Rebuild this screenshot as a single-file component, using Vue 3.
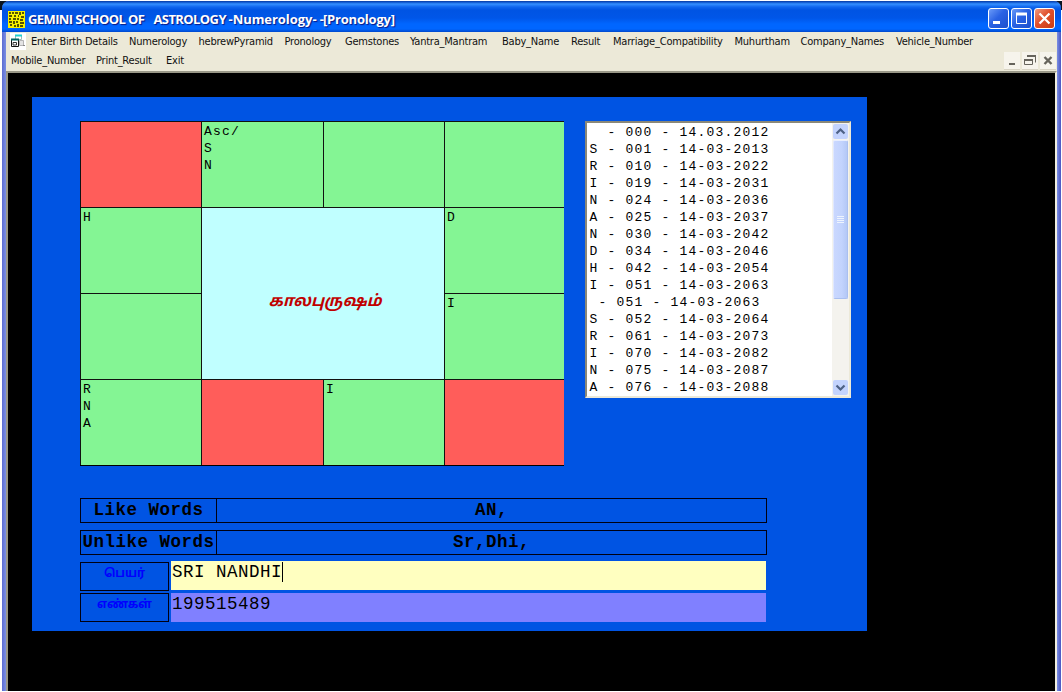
<template>
  <div class="screen">
    <div class="window">
      <header class="title-bar">
        <svg class="app-icon" width="17" height="17" viewBox="0 0 17 17">
          <rect width="17" height="17" fill="#f8f000" />
          <g stroke="#202000" stroke-width="1.5" fill="none">
            <path d="M1 2h2M5 1v2M7 2h3M12 1v3M14 2h2M1 5h3M6 5h2M10 5h1M13 6h3" />
            <path d="M2 7v2M5 8h3M10 7v2M12 9h3M1 11h3M6 10v3M8 11h2M12 12h4" />
            <path d="M2 14h2M6 15h2M10 13v3M12 15h3" />
          </g>
        </svg>
        <h1 class="title">
          <span class="t1">GEMINI SCHOOL OF</span>
          <span class="t2">ASTROLOGY</span>
          <span class="t3">-Numerology- -</span>
          <span class="t4">[Pronology]</span>
        </h1>
        <div class="controls">
          <button class="control">
            <svg width="21" height="21"><path d="M5 14.5h7" stroke="#fff" stroke-width="3" /></svg>
          </button>
          <button class="control">
            <svg width="21" height="21">
              <path d="M5.5 5.5h10v10h-10z" fill="none" stroke="#fff" />
              <path d="M5 6h11" stroke="#fff" stroke-width="3" />
            </svg>
          </button>
          <button class="control close">
            <svg width="21" height="21">
              <path d="M5.5 5.5l10 10M15.5 5.5l-10 10" stroke="#fff" stroke-width="2.3" />
            </svg>
          </button>
        </div>
      </header>

      <nav class="menu">
        <div class="menu-row first">
          <svg class="form-icon" width="16" height="17" viewBox="0 0 16 17">
            <rect width="16" height="17" fill="#fff" />
            <path d="M5.5 2.500h6v4h-6z" fill="#fff" stroke="#9bb" />
            <path d="M5 2.500h7" stroke="#20d0d0" stroke-width="2" />
            <path d="M9.500 7.500h4v5h-4z" fill="#e4e4e4" stroke="#b4b4b4" />
            <path d="M13 12.500h2" stroke="#888" />
            <path d="M1.500 6.500h7v7h-7z" fill="#fff" stroke="#111" />
            <path d="M1 6.500h8" stroke="#066" stroke-width="2" />
            <path d="M3 9.500h3.500v2.500h-3.500z" fill="none" stroke="#333" />
          </svg>
          <a v-for="item in menuTop" :key="item">{{ item }}</a>
        </div>
        <div class="menu-row second">
          <a v-for="item in menuBottom" :key="item">{{ item }}</a>
          <div class="mdi">
            <button><svg width="16" height="17"><path d="M5 12h6" stroke="#66645c" stroke-width="2" /></svg></button>
            <button>
              <svg width="16" height="17" fill="none" stroke="#66645c">
                <path d="M5 4.500h8.500v6" />
                <path d="M5 4h9" stroke-width="2" />
                <path d="M2.500 7.500h8v5h-8z" />
                <path d="M2 8h9" stroke-width="2" />
              </svg>
            </button>
            <button>
              <svg width="16" height="17"><path d="M4.500 5l7 7M11.500 5l-7 7" stroke="#66645c" stroke-width="2.400" /></svg>
            </button>
          </div>
        </div>
      </nav>

      <main class="client">
        <section class="panel">
          <div class="top">
            <div class="chart">
              <div v-for="(cell, i) in cells" :key="i" class="cell" :class="cell.type">{{ cell.text }}</div>
            </div>

            <div class="list">
              <div class="rows">
                <div v-for="(row, i) in rows" :key="i" class="row">{{ row }}</div>
              </div>
              <div class="scrollbar">
                <div class="arrow">
                  <svg width="15" height="15"><path d="M3.500 9.500l4-4 4 4" fill="none" stroke="#4d6185" stroke-width="2.200" /></svg>
                </div>
                <div class="thumb"><i></i><i></i><i></i><i></i></div>
                <div class="track"></div>
                <div class="arrow">
                  <svg width="15" height="15"><path d="M3.500 5.500l4 4 4-4" fill="none" stroke="#4d6185" stroke-width="2.200" /></svg>
                </div>
              </div>
            </div>
          </div>

          <div class="words">
            <div class="label">Like Words</div>
            <div class="value">AN,</div>
          </div>
          <div class="words">
            <div class="label">Unlike Words</div>
            <div class="value">Sr,Dhi,</div>
          </div>
          <div class="field name">
            <div class="field-label">பெயர்</div>
            <div class="field-value">{{ name }}<span class="caret"></span></div>
          </div>
          <div class="field numbers">
            <div class="field-label">எண்கள்</div>
            <div class="field-value">{{ numbers }}</div>
          </div>
        </section>
      </main>
    </div>
  </div>
</template>

<script setup>
import { ref } from 'vue';

const menuTop = [
  'Enter Birth Details', 'Numerology', 'hebrewPyramid', 'Pronology', 'Gemstones',
  'Yantra_Mantram', 'Baby_Name', 'Result', 'Marriage_Compatibility', 'Muhurtham',
  'Company_Names', 'Vehicle_Number'
];
const menuBottom = ['Mobile_Number', 'Print_Result', 'Exit'];

const name = ref('SRI NANDHI');
const numbers = ref('199515489');

// houses of the chart, row by row, the center one spans 2x2
const cells = [
  { type: 'red', text: '' },
  { type: 'green', text: 'Asc/\nS\nN' },
  { type: 'green', text: '' },
  { type: 'green', text: '' },
  { type: 'green', text: 'H' },
  { type: 'center', text: 'காலபுருஷம்' },
  { type: 'green', text: 'D' },
  { type: 'green', text: '' },
  { type: 'green', text: 'I' },
  { type: 'green', text: 'R\nN\nA' },
  { type: 'red', text: '' },
  { type: 'green', text: 'I' },
  { type: 'red', text: '' }
];

const rows = [
  '  - 000 - 14.03.2012',
  'S - 001 - 14-03-2013',
  'R - 010 - 14-03-2022',
  'I - 019 - 14-03-2031',
  'N - 024 - 14-03-2036',
  'A - 025 - 14-03-2037',
  'N - 030 - 14-03-2042',
  'D - 034 - 14-03-2046',
  'H - 042 - 14-03-2054',
  'I - 051 - 14-03-2063',
  ' - 051 - 14-03-2063',
  'S - 052 - 14-03-2064',
  'R - 061 - 14-03-2073',
  'I - 070 - 14-03-2082',
  'N - 075 - 14-03-2087',
  'A - 076 - 14-03-2088'
];
</script>

<style>
body {
  margin: 0;
  overflow: hidden;
}
</style>

<style scoped>
.screen {
  box-sizing: border-box;
  width: 1062px;
  height: 692px;
  padding: 1px 1px 1px 2px;
  background: linear-gradient(#fff 1px, #0a1420 1px, #0a1420 10px, #fff 10px);
}

.window {
  display: flex;
  flex-direction: column;
  height: 690px;
  border-radius: 7px 7px 0 0;
  overflow: hidden;
  background: linear-gradient(90deg, #5c6cd0, #7b8fe4 4px, #7b8fe4 1055px, #4a55c0);
}

.title-bar {
  display: flex;
  align-items: center;
  box-sizing: border-box;
  height: 31px;
  padding: 5px 6px 0 6px;
  background: linear-gradient(#0b3c9c 0, #0b50c8 1px, #3590ff 3px, #1066ee 6px, #0054e3 9px, #0056e8 17px, #0066ff 23px, #0066ff 28px, #0048cc 31px);
}

.title {
  display: flex;
  flex: 1;
  margin: 0 0 0 3px;
  font: bold 13px/18px "Open Sans", "Noto Sans", sans-serif;
  letter-spacing: -0.600px;
  color: #fff;
  text-shadow: 1px 1px 1px #0a1883;
  white-space: pre;
}

.t1 {
  width: 125.500px;
}

.t2 {
  width: 75px;
}

.t3 {
  width: 94.500px;
  letter-spacing: -0.050px;
}

.t4 {
  letter-spacing: -0.200px;
}

.controls {
  display: flex;
  gap: 2px;
  margin-top: -2px;
}

.control {
  display: flex;
  box-sizing: border-box;
  width: 21px;
  height: 21px;
  padding: 0;
  border: 1px solid #fff;
  border-radius: 3px;
  background: linear-gradient(135deg, #6a9af8, #2a62e4 45%, #1c50cc);
}

.control svg {
  flex: none;
  margin: -1px;
}

.close {
  background: linear-gradient(135deg, #f09a80, #e0502c 45%, #c83c14);
}

.menu {
  box-sizing: border-box;
  height: 39px;
  margin: 0 4px;
  background: #ece9d8;
  font: 11px/19px "DejaVu Sans Condensed", "DejaVu Sans", sans-serif;
  letter-spacing: -0.220px;
  color: #111;
}

.menu-row {
  display: grid;
  height: 19px;
  white-space: nowrap;
}

.first {
  grid-template-columns: 25px 98px 69.500px 86px 60.500px 65px 92px 69px 42px 121.500px 66px 95.500px 1fr;
}

.form-icon {
  margin: 1px 0 0 4px;
}

.second {
  grid-template-columns: 85px 70px 1fr auto;
  padding: 0 1px 0 5px;
}

.mdi {
  display: flex;
  gap: 2px;
  padding-top: 1px;
}

.mdi button {
  display: flex;
  width: 16px;
  height: 17px;
  padding: 0;
  border: 0;
  background: #f6f4ec;
  box-shadow: 0 1px #d8d4c4;
}

.client {
  box-sizing: border-box;
  flex: 1;
  margin: 0 4px;
  padding: 24px 0 0 24px;
  border: 2px solid #9a9888;
  border-right-color: #f1efe2;
  border-bottom: 0;
  background: #000;
}

.panel {
  box-sizing: border-box;
  width: 835px;
  height: 534px;
  padding: 24px 0 0 48px;
  background: #0054e3;
  font-family: "Liberation Mono", monospace;
  color: #000;
}

.top {
  display: flex;
  gap: 21px;
  height: 377px;
}

.chart {
  display: grid;
  grid-template-columns: 121px 122px 121px 120px;
  grid-template-rows: repeat(4, 86px);
  align-self: flex-start;
  border-bottom: 1px solid #000;
}

.cell {
  border: solid #111;
  border-width: 1px 0 0 1px;
  padding: 1px 2px;
  font-size: 13px;
  line-height: 17px;
  letter-spacing: 1.200px;
  white-space: pre;
}

.red {
  background: #ff5d5a;
}

.green {
  background: #84f594;
}

.center {
  display: flex;
  grid-column: 2 / 4;
  grid-row: 2 / 4;
  align-items: center;
  justify-content: center;
  padding: 17px 0 0 4px;
  background: #c0ffff;
  color: #c00000;
  font: italic bold 15.800px "Noto Sans Tamil", "Noto Sans", sans-serif;
  letter-spacing: 0;
}

.list {
  display: flex;
  box-sizing: border-box;
  width: 266px;
  height: 277px;
  border: 2px solid #ece9d8;
  border-top-color: #8a8878;
  border-left-color: #8a8878;
  background: #fff;
}

.rows {
  flex: 1;
  padding: 1px 0 0 2.500px;
  font-size: 13px;
  line-height: 17px;
  letter-spacing: 1.200px;
  white-space: pre;
}

.scrollbar {
  display: flex;
  flex-direction: column;
  width: 17px;
  background: #f4f3ee;
}

.arrow {
  height: 15px;
  margin: 1px;
  border-radius: 2px;
  background: #c3d3fd;
}

.thumb {
  display: flex;
  flex-direction: column;
  align-items: center;
  justify-content: center;
  gap: 1px;
  box-sizing: border-box;
  height: 159px;
  margin: 0 1px;
  border: 1px solid #a9bff0;
  border-top-color: #e8eefe;
  border-left-color: #e0e8fe;
  border-radius: 2px;
  background: linear-gradient(90deg, #cad8ff, #c2d3fd 60%, #b4c8f6);
}

.thumb i {
  width: 7px;
  height: 1px;
  background: #eef4fe;
}

.track {
  flex: 1;
}

.words {
  display: flex;
  box-sizing: border-box;
  width: 687px;
  height: 25px;
  margin-bottom: 7px;
  border: 1px solid #001;
  font-size: 17.500px;
  font-weight: bold;
  line-height: 22px;
  letter-spacing: 0.500px;
  text-align: center;
}

.label {
  width: 135px;
  border-right: 1px solid #001;
  white-space: nowrap;
}

.value {
  flex: 1;
}

.field {
  display: flex;
  gap: 2px;
  width: 686px;
  height: 30px;
  margin-bottom: 2px;
}

.field-label {
  box-sizing: border-box;
  width: 89px;
  height: 29px;
  border: 1px solid #001;
  font: bold 11.600px/22px "Noto Sans Tamil", "Noto Sans", sans-serif;
  color: #0000ff;
  text-align: center;
}

.name {
  margin-top: -1px;
}

.name .field-label {
  margin-top: 1px;
}

.field-value {
  display: flex;
  box-sizing: border-box;
  flex: 1;
  height: 29px;
  padding-left: 1px;
  font-size: 17.500px;
  line-height: 22px;
  letter-spacing: 0.500px;
  white-space: pre;
}

.name .field-value {
  background: #ffffc0;
}

.numbers .field-value {
  background: #8080ff;
}

.caret {
  width: 1px;
  height: 20px;
  margin-top: 1px;
  background: #000;
}
</style>
